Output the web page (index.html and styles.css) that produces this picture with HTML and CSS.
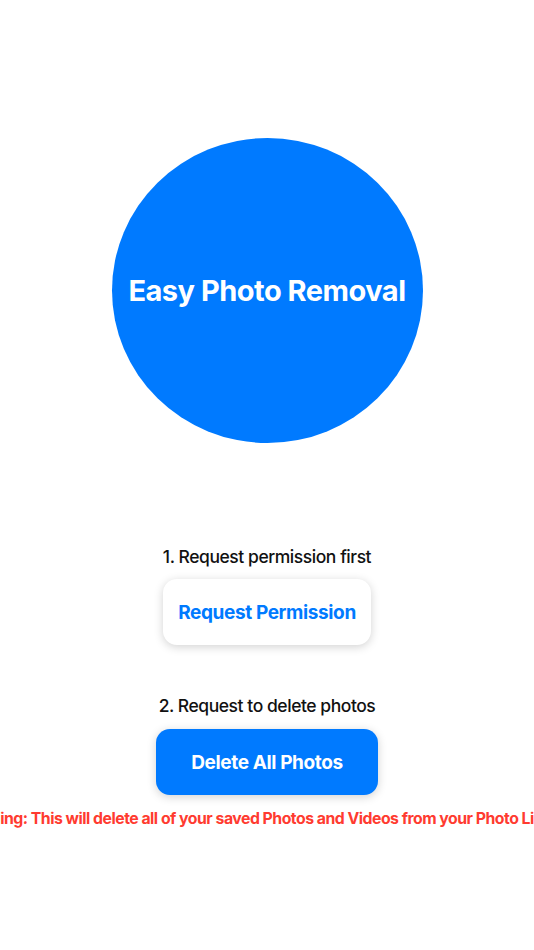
FILE: index.html
```html
<!DOCTYPE html>
<html>
<head>
<meta charset="utf-8">
<link rel="stylesheet" href="styles.css">
</head>
<body>
<main class="screen">
  <div class="logo"><span class="logo-text">Easy Photo Removal</span></div>
  <p class="step step-1">1. Request permission first</p>
  <button class="btn btn-light">Request Permission</button>
  <p class="step step-2">2. Request to delete photos</p>
  <button class="btn btn-primary">Delete All Photos</button>
  <div class="warning-row"><p class="warning">Warning: This will delete all of your saved Photos and Videos from your Photo Library</p></div>
</main>
</body>
</html>
```
FILE: styles.css
```css
html, body {
  margin: 0;
  padding: 0;
  background: #ffffff;
  overflow: hidden;
}
.screen {
  width: 534px;
  height: 950px;
  display: flex;
  flex-direction: column;
  align-items: center;
  font-family: Inter, "Noto Sans", sans-serif;
  padding-top: 138px;
  box-sizing: border-box;
  overflow: hidden;
}
.logo {
  width: 311px;
  height: 305px;
  border-radius: 50%;
  background: #007aff;
  display: flex;
  align-items: center;
  justify-content: center;
  flex-shrink: 0;
}
.logo-text {
  color: #fff;
  font-weight: 700;
  font-size: 29px;
  letter-spacing: -0.5px;
  white-space: nowrap;
}
.step {
  margin: 0;
  font-size: 17.5px;
  line-height: 24px;
  font-weight: 500;
  color: #111;
  white-space: nowrap;
  letter-spacing: -0.45px;
}
.step-1 { margin-top: 102px; }
.step-2 { margin-top: 49px; }
.btn {
  margin-top: 10px;
  height: 66px;
  border: none;
  border-radius: 14px;
  font-family: inherit;
  font-weight: 700;
  font-size: 19px;
  letter-spacing: -0.38px;
  box-shadow: 0 2px 10px rgba(0,0,0,0.18);
  flex-shrink: 0;
}
.btn-light {
  width: 208px;
  background: #fff;
  color: #007aff;
}
.btn-primary {
  margin-top: 11px;
  width: 222px;
  background: #007aff;
  color: #fff;
}
.warning-row {
  width: 534px;
  display: flex;
  justify-content: center;
  margin-top: 14px;
}
.warning {
  margin: 0;
  flex-shrink: 0;
  white-space: nowrap;
  color: #ff3b30;
  font-weight: 650;
  font-size: 15.8px;
  line-height: 20px;
  letter-spacing: -0.5px;
}
```
